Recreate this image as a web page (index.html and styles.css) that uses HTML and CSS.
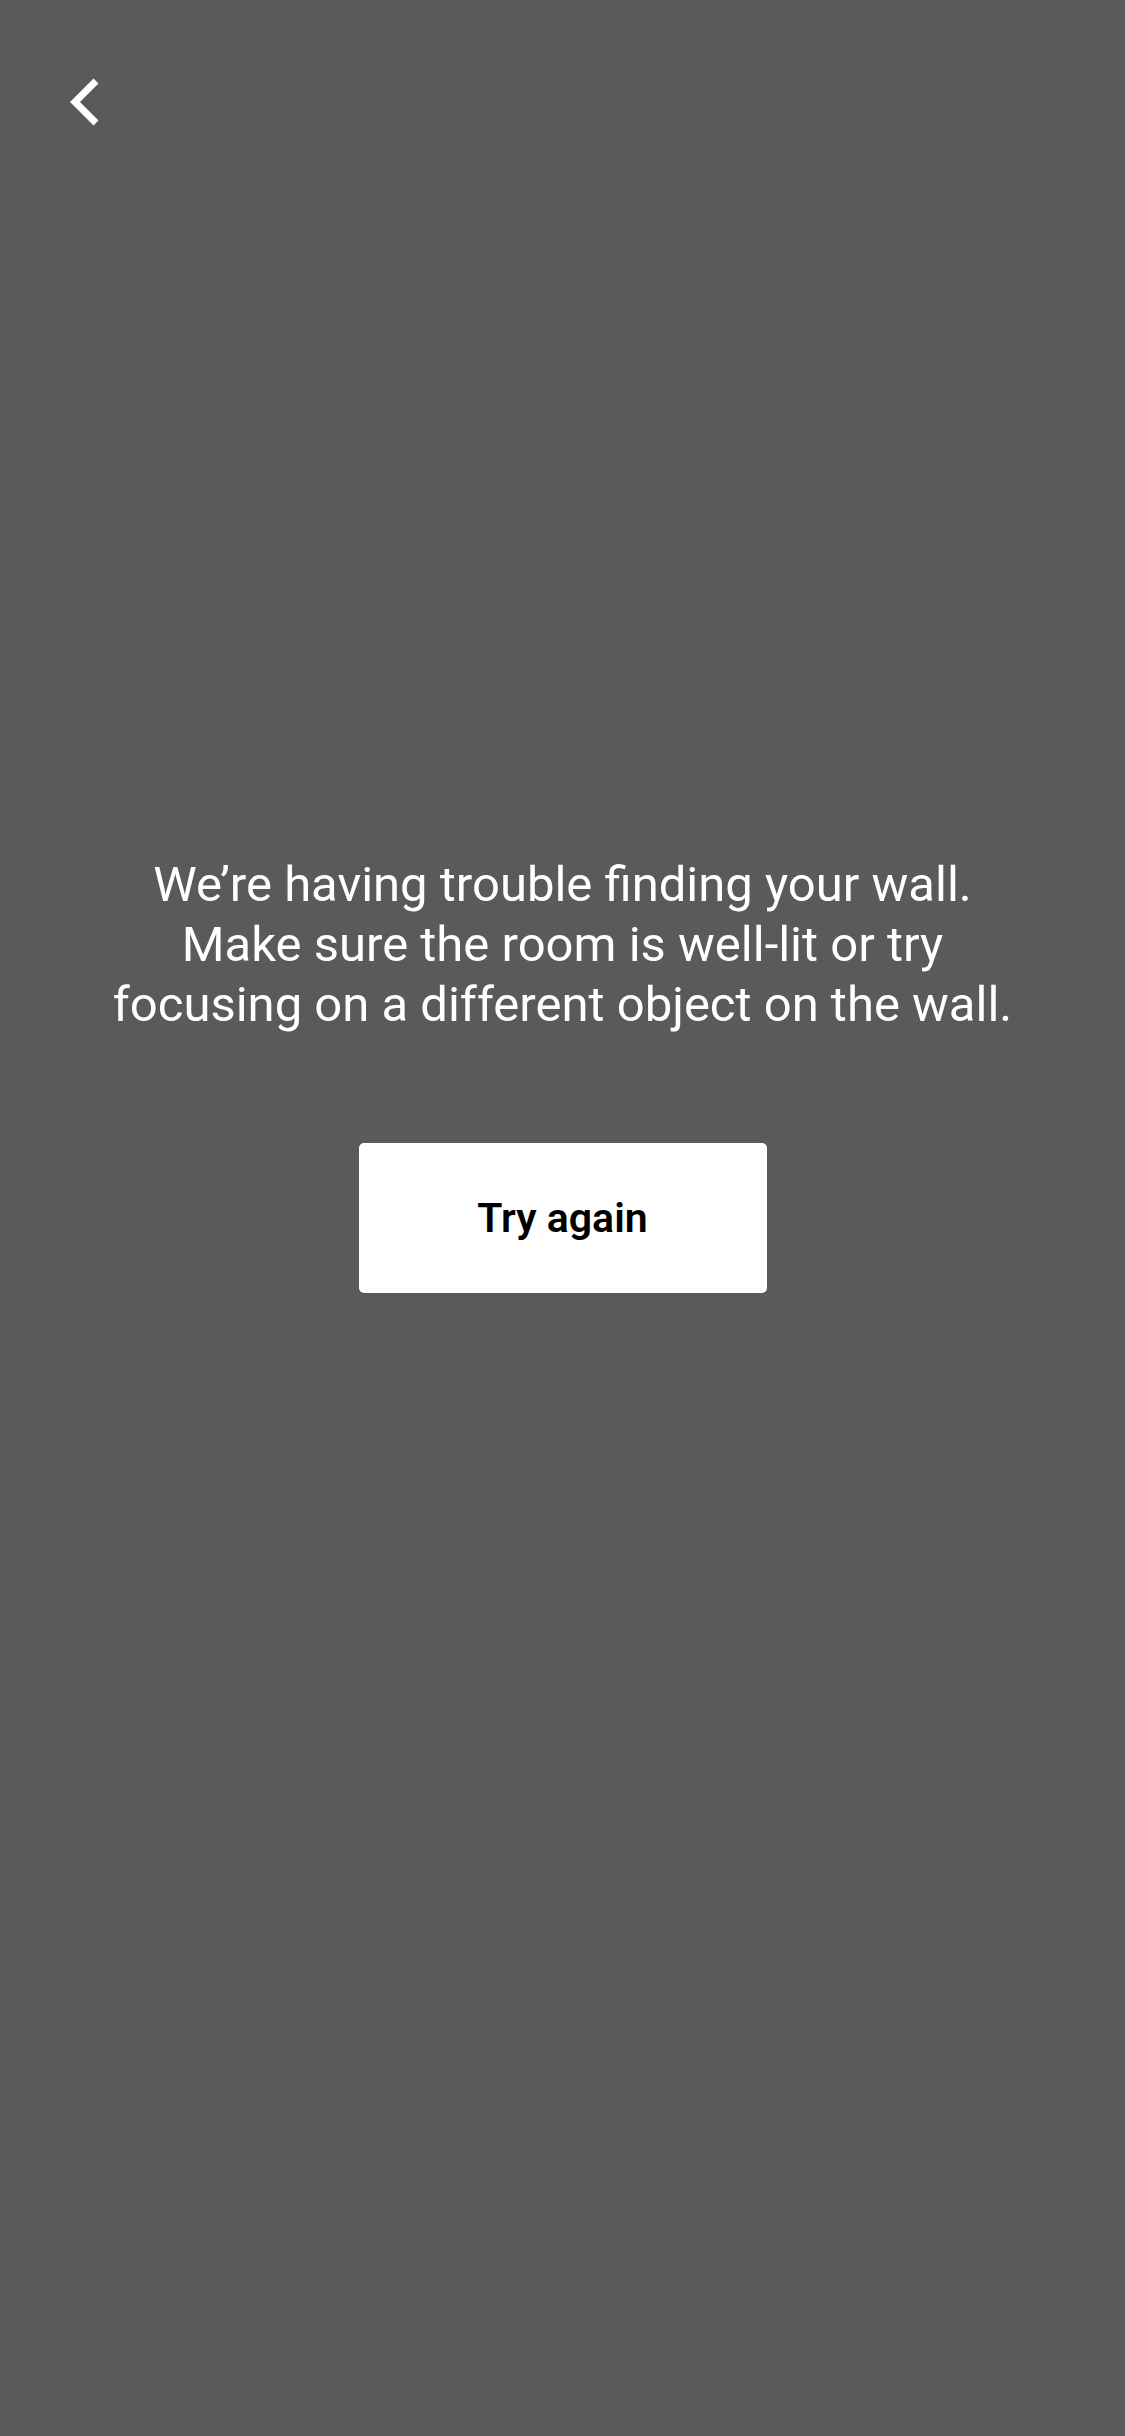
FILE: index.html
```html
<!DOCTYPE html>
<html>
<head>
<meta charset="utf-8">
<link rel="stylesheet" href="styles.css">
</head>
<body>
<div class="screen">
  <header class="top">
    <button class="back" aria-label="Back">
      <svg width="30" height="48" viewBox="0 0 30 48"><path d="M26 3 L5 24 L26 45" fill="none" stroke="#fff" stroke-width="7" stroke-linecap="butt" stroke-linejoin="miter"/></svg>
    </button>
  </header>
  <main class="content">
    <p class="message">We’re having trouble finding your wall.<br>Make sure the room is well-lit or try<br>focusing on a different object on the wall.</p>
    <button class="primary">Try again</button>
  </main>
</div>
</body>
</html>
```
FILE: styles.css
```css
html, body {
  margin: 0;
  padding: 0;
  background: #5a5a5a;
}
.screen {
  width: 1125px;
  height: 2436px;
  display: flex;
  flex-direction: column;
  font-family: Roboto, "Liberation Sans", sans-serif;
}
.top {
  padding: 78px 0 0 70px;
  height: 60px;
}
.back {
  background: none;
  border: 0;
  padding: 0;
  display: block;
  width: 30px;
  height: 48px;
}
.back svg { display: block; }
.content {
  display: flex;
  flex-direction: column;
  align-items: center;
  padding-top: 717px;
}
.message {
  margin: 0;
  color: #fff;
  font-size: 49px;
  line-height: 60px;
  text-align: center;
  font-weight: 400;
}
.primary {
  margin-top: 108px;
  width: 408px;
  height: 150px;
  background: #fff;
  border: 0;
  border-radius: 5px;
  color: #000;
  font-family: Roboto, "Liberation Sans", sans-serif;
  font-size: 41px;
  font-weight: 600;
}
```
